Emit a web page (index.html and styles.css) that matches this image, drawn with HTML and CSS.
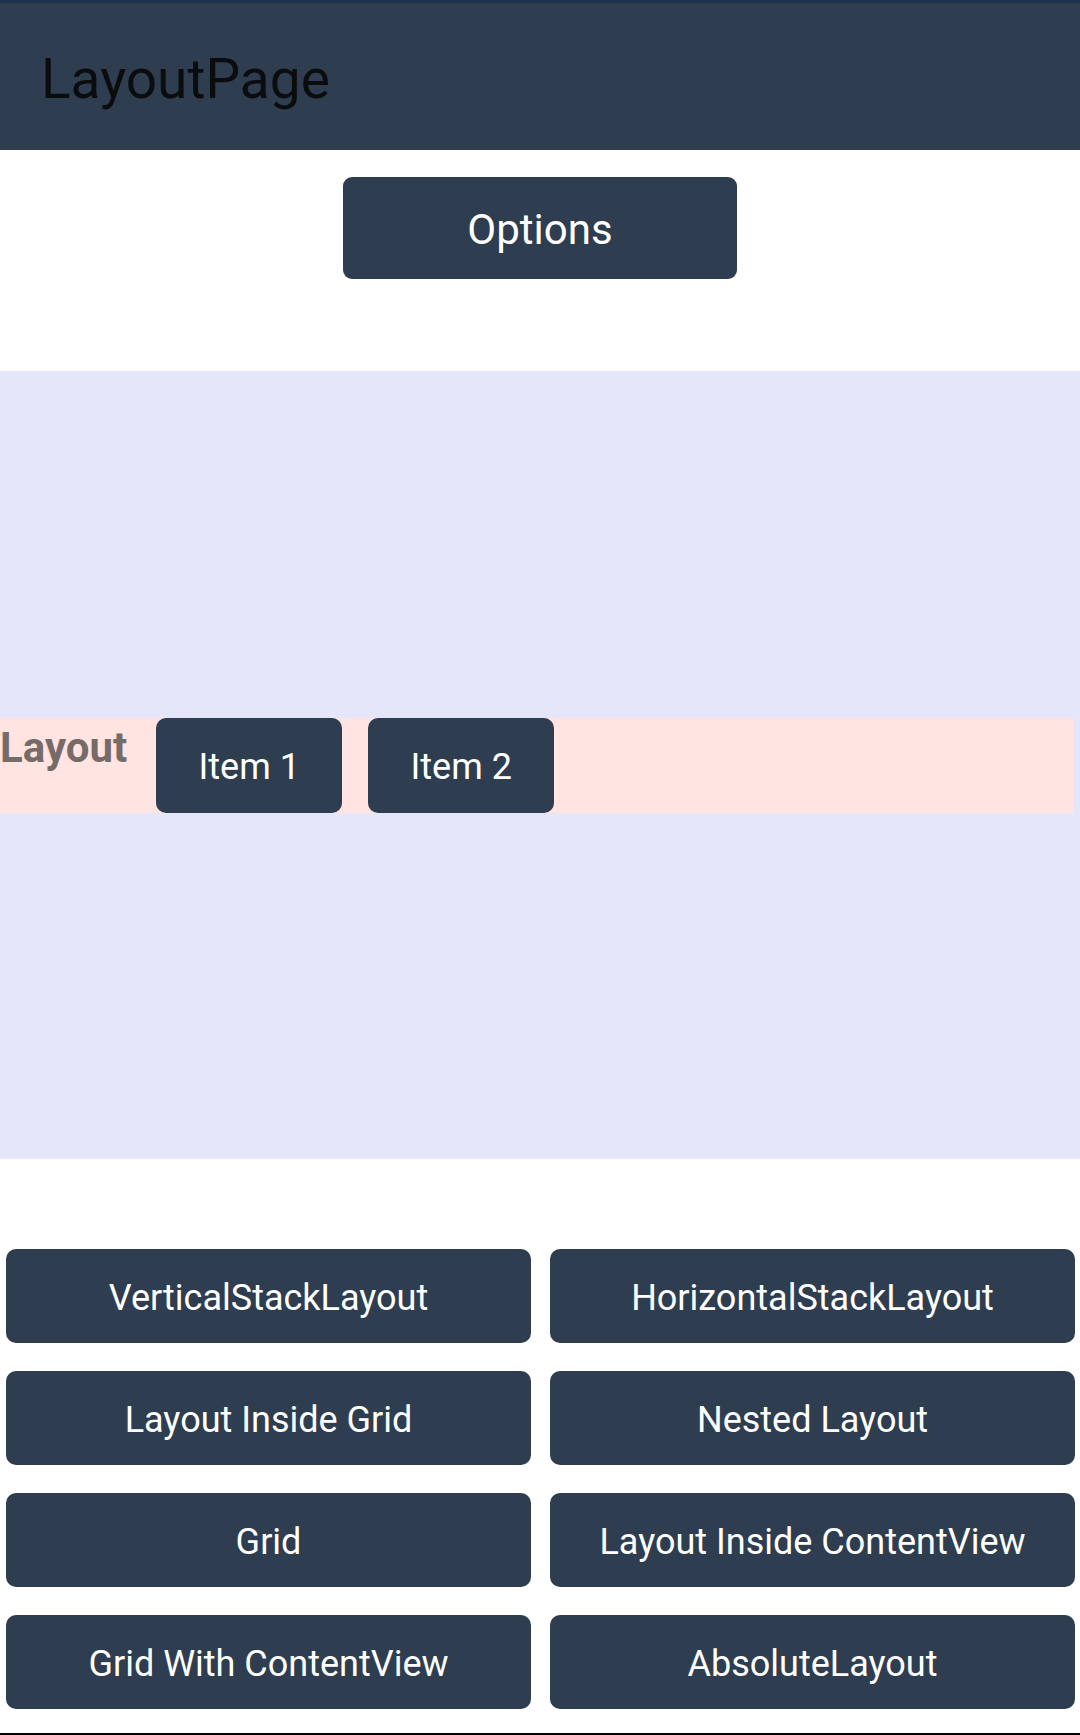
FILE: index.html
```html
<!DOCTYPE html>
<html lang="en">
<head>
    <meta charset="UTF-8">
    <meta name="viewport" content="width=device-width, initial-scale=1.0">
    <title>LayoutPage</title>
    <link rel="stylesheet" href="styles.css">
</head>
<body>
    <div class="status-strip"></div>
    <header class="app-bar">
        <h1 class="page-title">LayoutPage</h1>
    </header>

    <main class="page">
        <div class="options-row">
            <button class="btn btn-options">Options</button>
        </div>

        <section class="demo-area">
            <div class="demo-row">
                <span class="demo-label">Layout</span>
                <button class="btn btn-item">Item 1</button>
                <button class="btn btn-item">Item 2</button>
            </div>
        </section>

        <nav class="layout-grid">
            <button class="btn btn-grid">VerticalStackLayout</button>
            <button class="btn btn-grid">HorizontalStackLayout</button>
            <button class="btn btn-grid">Layout Inside Grid</button>
            <button class="btn btn-grid">Nested Layout</button>
            <button class="btn btn-grid">Grid</button>
            <button class="btn btn-grid">Layout Inside ContentView</button>
            <button class="btn btn-grid">Grid With ContentView</button>
            <button class="btn btn-grid">AbsoluteLayout</button>
        </nav>
    </main>

    <div class="bottom-line"></div>
</body>
</html>
```

FILE: styles.css
```css
* {
    margin: 0;
    padding: 0;
    box-sizing: border-box;
}

body {
    font-family: Roboto, "Noto Sans", sans-serif;
    background: #ffffff;
    width: 1080px;
    height: 1735px;
    overflow: hidden;
}

.status-strip {
    height: 3px;
    background: #1c324e;
}

.app-bar {
    height: 147px;
    background: #2e3e50;
    display: flex;
    align-items: center;
    padding: 5px 0 0 41px;
}

.page-title {
    font-size: 55px;
    font-weight: 400;
    color: #0b0c0d;
}

.btn {
    font-family: Roboto, "Noto Sans", sans-serif;
    font-size: 36px;
    font-weight: 400;
    color: #ffffff;
    background: #2e3e50;
    border: none;
    border-radius: 10px;
    display: flex;
    align-items: center;
    justify-content: center;
    padding-top: 4px;
}

.options-row {
    display: flex;
    justify-content: center;
    padding-top: 27px;
}

.btn-options {
    width: 394px;
    height: 102px;
    font-size: 42px;
    border-radius: 9px;
    padding-top: 3px;
}

.demo-area {
    margin-top: 92px;
    height: 788px;
    background: #e6e6fa;
    display: flex;
    align-items: center;
}

.demo-row {
    width: 1073px;
    height: 95px;
    background: #ffe4e1;
    display: flex;
    gap: 26px;
}

.demo-label {
    font-size: 42px;
    font-weight: 700;
    color: #766b68;
    padding-top: 5px;
    margin-right: 3px;
}

.btn-item {
    width: 186px;
    height: 95px;
}

.layout-grid {
    margin-top: 90px;
    padding: 0 5px 0 6px;
    display: grid;
    grid-template-columns: 525px 525px;
    grid-auto-rows: 94px;
    column-gap: 19px;
    row-gap: 28px;
}

.bottom-line {
    margin-top: 24px;
    height: 2px;
    background: #000000;
}
```
